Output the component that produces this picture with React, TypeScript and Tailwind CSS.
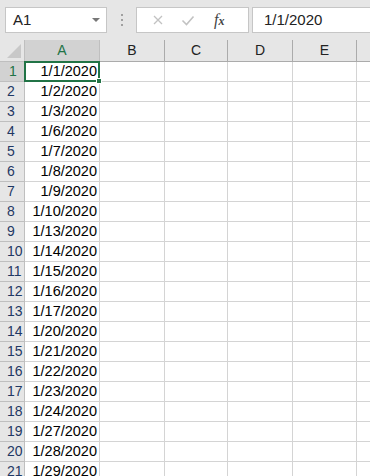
const dates = [
  '1/1/2020', '1/2/2020', '1/3/2020', '1/6/2020', '1/7/2020', '1/8/2020', '1/9/2020',
  '1/10/2020', '1/13/2020', '1/14/2020', '1/15/2020', '1/16/2020', '1/17/2020',
  '1/20/2020', '1/21/2020', '1/22/2020', '1/23/2020', '1/24/2020', '1/27/2020',
  '1/28/2020', '1/29/2020',
];

const cols = ['B', 'C', 'D', 'E'];

export default function App() {
  return (
    <div className="w-[370px] h-[476px] overflow-hidden bg-white font-['Liberation_Sans',sans-serif] text-black">
      {/* Formula bar */}
      <div className="h-[40px] bg-[#e6e6e6] flex items-start pt-[7px] pl-[5px]">
        <div className="w-[102px] h-[26px] bg-white border border-[#c6c6c6] flex items-center justify-between pl-[7px] pr-[4px]">
          <span className="text-[15px] text-[#222]">A1</span>
          <svg width="10" height="6" viewBox="0 0 10 6" className="mr-[1px]">
            <path d="M1 1h8L5 5z" fill="#777" />
          </svg>
        </div>
        <div className="w-[29px] h-[26px] flex flex-col items-center justify-center gap-[3px]">
          <span className="w-[2px] h-[2px] bg-[#a0a0a0]" />
          <span className="w-[2px] h-[2px] bg-[#a0a0a0]" />
          <span className="w-[2px] h-[2px] bg-[#a0a0a0]" />
        </div>
        <div className="w-[113px] h-[26px] bg-white border border-[#c6c6c6] flex items-center">
          <svg width="12" height="12" viewBox="0 0 12 12" className="ml-[15px]">
            <path d="M2 2l8 8M10 2l-8 8" stroke="#c2c2c2" strokeWidth="1.3" />
          </svg>
          <svg width="14" height="12" viewBox="0 0 14 12" className="ml-[17px]">
            <path d="M1.5 6.5l4 4 7-8" stroke="#c2c2c2" strokeWidth="1.6" fill="none" />
          </svg>
          <span className="ml-[19px] text-[16px] italic font-['Liberation_Serif',serif] text-[#444] leading-none">
            f<span className="text-[12px] font-bold">x</span>
          </span>
        </div>
        <div className="ml-[3px] flex-1 h-[26px] bg-white border border-r-0 border-[#c6c6c6] flex items-center pl-[11px]">
          <span className="text-[15px] text-[#222]">1/1/2020</span>
        </div>
      </div>

      {/* Sheet */}
      <div className="grid grid-cols-[25px_75px_65px_63px_65px_64px_1fr] auto-rows-[20px] grid-rows-[22px]">
        <div className="bg-[#e6e6e6] border-r border-b border-[#bfbfbf] relative overflow-hidden">
          <svg width="14" height="14" viewBox="0 0 14 14" className="absolute right-[3px] bottom-[3px]">
            <path d="M14 0V14H0z" fill="#c8c8c8" />
          </svg>
        </div>
        <div className="bg-[#d2d2d2] border-r border-b border-[#bfbfbf] flex items-center justify-center text-[14px] text-[#217346]">
          A
        </div>
        {cols.map((c) => (
          <div
            key={c}
            className="bg-[#e6e6e6] border-r border-b border-[#ababab] flex items-center justify-center text-[14px] text-[#222]"
          >
            {c}
          </div>
        ))}
        <div className="bg-[#e6e6e6] border-b border-[#ababab]" />

        {dates.map((d, i) => (
          <div key={d} className="contents">
            <div
              className={
                i === 0
                  ? 'bg-[#d2d2d2] border-r border-b border-[#bfbfbf] flex items-center pl-[9px] text-[14px] text-[#217346]'
                  : 'bg-[#e6e6e6] border-r border-b border-[#bfbfbf] flex items-center pl-[7px] text-[14px] text-[#1f3864]'
              }
            >
              {i + 1}
            </div>
            <div
              className={
                i === 0
                  ? 'relative border-2 border-[#217346] -mt-[1px] -ml-[1px] flex items-center justify-end pr-[1px] text-[14.5px]'
                  : 'border-r border-b border-[#d4d4d4] flex items-center justify-end pr-[2px] text-[14.5px]'
              }
            >
              {d}
              {i === 0 && (
                <span className="absolute -right-[4px] -bottom-[4px] w-[6px] h-[6px] bg-[#217346] border border-white" />
              )}
            </div>
            {cols.map((c) => (
              <div key={c} className="border-r border-b border-[#d4d4d4]" />
            ))}
            <div className="border-b border-[#d4d4d4]" />
          </div>
        ))}
      </div>
    </div>
  );
}
